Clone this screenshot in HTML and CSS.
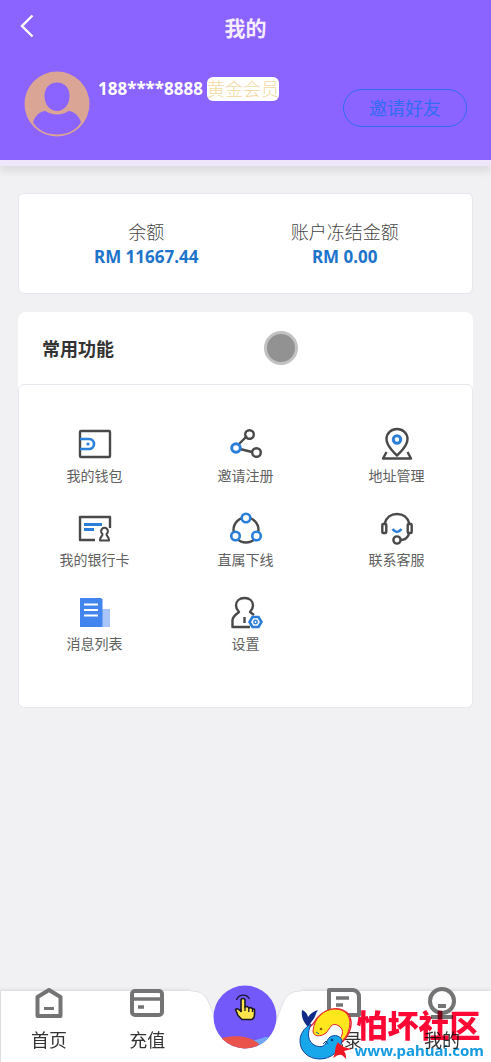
FILE: index.html
```html
<!DOCTYPE html>
<html lang="zh-CN">
<head>
<meta charset="utf-8">
<meta name="viewport" content="width=device-width, initial-scale=1">
<title>我的</title>
<link rel="stylesheet" href="styles.css">
</head>
<body>
<div class="page">
  <header class="header">
    <div class="titlebar">
      <button class="back" type="button" aria-label="返回">
        <svg width="14" height="24" viewBox="0 0 14 24" fill="none" stroke="currentColor" stroke-width="2.4"><path d="M12.500 1.500 2 12l10.500 10.500"/></svg>
      </button>
      <h1 class="title">我的</h1>
    </div>
    <div class="profile">
      <svg class="avatar" viewBox="0 0 66 66"><circle cx="33" cy="33" r="32.500" fill="#dba596"/><path d="M33 11.500c7.500 0 12.500 5.500 12.500 13.500 0 8.500-5.500 15-12.500 15s-12.500-6.500-12.500-15c0-8 5-13.500 12.500-13.500Z" fill="#8b63ff"/><path d="M9 51.500c2-7 7-11 12.500-11.500 3 2 7 3.500 11.500 3.500s8.500-1.500 11.500-3.500C50 40.500 55 44.500 57 51.500 51 60 43 63.500 33 63.500S15 60 9 51.500Z" fill="#8b63ff"/></svg>
      <div class="member"><span class="phone">188****8888</span><span class="level">黄金会员</span></div>
      <button class="invite" type="button">邀请好友</button>
    </div>
  </header>

  <main class="content">
    <section class="card balances">
      <div class="balance"><span class="balance-label">余额</span><strong class="amount">RM 11667.44</strong></div>
      <div class="balance"><span class="balance-label">账户冻结金额</span><strong class="amount">RM 0.00</strong></div>
    </section>

    <section class="features">
      <div class="features-head">
        <h2 class="features-title">常用功能</h2>
        <span class="touch"></span>
      </div>
      <div class="features-grid">
        <a class="feature" href="#"><svg class="icon" viewBox="0 0 34 34"><rect class="dark" x="2" y="4" width="30" height="26" rx="1"/><path class="blue" d="M2 12h9a5 5 0 0 1 0 10H2"/><circle cx="10" cy="17" r="1.600" class="dot"/></svg>我的钱包</a>
        <a class="feature" href="#"><svg class="icon" viewBox="0 0 34 34"><path class="dark" d="m10 17 8-8M11 22l12 3"/><circle class="dark" cx="20.500" cy="7.500" r="4.300"/><circle class="dark" cx="27.500" cy="25.500" r="4.300"/><circle class="blue wide" cx="7" cy="21" r="4.300"/></svg>邀请注册</a>
        <a class="feature" href="#"><svg class="icon" viewBox="0 0 34 34"><path class="dark" d="M17 28.500S6.500 19.500 6.500 12a10.500 10 0 0 1 21 0C27.500 19.500 17 28.500 17 28.500ZM6.500 25l-3.500 6.500h28l-3.500-6.500"/><circle class="blue wide" cx="17" cy="12.500" r="3.700"/></svg>地址管理</a>
        <a class="feature" href="#"><svg class="icon" viewBox="0 0 34 34"><path class="dark" d="M17 29H2V6h30v11"/><path class="blue wide" d="M6 13.500h18M6 18.500h10"/><path class="dark thin" d="M24.500 23a3.400 3.400 0 1 1 4 0c-.5 2 2.500 2 2.500 6.500h-9c0-4.500 3-4.500 2.500-6.500Z"/></svg>我的银行卡</a>
        <a class="feature" href="#"><svg class="icon" viewBox="0 0 34 34"><circle class="dark" cx="17" cy="19" r="12.500"/><circle class="blue filled" cx="17" cy="7" r="4.300"/><circle class="blue filled" cx="6.500" cy="25" r="4.300"/><circle class="blue filled" cx="27.500" cy="25" r="4.300"/></svg>直属下线</a>
        <a class="feature" href="#"><svg class="icon" viewBox="0 0 34 34"><path class="dark" d="M4.500 13C6 6.500 11 3 17 3s11 3.500 12.500 10M29 23c-1.500 4-5 6-8.500 6"/><rect class="dark" x="2.300" y="13" width="4" height="9" rx="1"/><rect class="dark" x="27.700" y="13" width="4" height="9" rx="1"/><circle class="dark" cx="17" cy="29" r="3.600"/><path class="blue" d="M12.500 18q4.500 6 9 0"/></svg>联系客服</a>
        <a class="feature" href="#"><svg class="icon" viewBox="0 0 34 34"><path fill="#a9c5fb" d="M23 14h9v18h-9z"/><path fill="#4285ef" d="M2 3h21l1.500 1.500V32H2z"/><path stroke="#fff" stroke-width="2" d="M6 9.500h14M6 15h14M6 20.500h14"/></svg>消息列表</a>
        <a class="feature" href="#"><svg class="icon" viewBox="0 0 34 34"><path class="dark" d="M21 32H3.500v-7c0-3 2.500-5 6.500-8-2-2-3-4-3-6.500C7 6 10.500 3 15.500 3S24 6 24 10.500c0 2.500-1 4.500-3 6.500l4 3M15.500 22v6"/><path class="blue filled" d="m23.500 22-3 5 3 5h6l3-5-3-5Z"/><circle cx="26.500" cy="27" r="1.700" fill="none" stroke="#2b7fd9" stroke-width="1.500"/></svg>设置</a>
      </div>
    </section>
  </main>

  <nav class="tabbar">
    <div class="tabbar-back">
      <span class="shelf shelf-left"></span>
      <svg class="notch" viewBox="0 0 110 71"><path fill="#fff" d="M0 0C9 0 14 3 18 12L22 22C28 44 38 57 55 57S82 44 88 22L92 12C96 3 101 0 110 0v71H0Z"/><path fill="none" stroke="#dedfe5" d="M0 0C9 0 14 3 18 12L22 22C28 44 38 57 55 57S82 44 88 22L92 12C96 3 101 0 110 0"/></svg>
      <span class="shelf shelf-right"></span>
    </div>
    <a class="tab" href="#"><svg class="tab-icon" viewBox="0 0 36 32"><path d="M6.500 10 18 3l11.500 7v19h-23Z"/><path stroke-width="3" d="M13 21.500h10"/></svg>首页</a>
    <a class="tab" href="#"><svg class="tab-icon" viewBox="0 0 36 32"><rect x="3" y="4" width="30" height="24" rx="3"/><path stroke-width="3.500" d="M3 12h30M9 20h6"/></svg>充值</a>
    <a class="tab tab-center" href="#" aria-label="点击">
      <svg class="orb" viewBox="0 0 64 64"><defs><clipPath id="orb-clip"><circle cx="32" cy="32" r="31.500"/></clipPath></defs><g clip-path="url(#orb-clip)"><path fill="#7459fa" d="M0 0h64v64H0z"/><path fill="#70a7f5" d="M38 56q10-2 14-4h12v12H38z"/><path fill="#e9534b" d="M6 54c14-5 32-3 40 5l-3 5H6z"/></g><path fill="none" stroke="#171733" stroke-width="1.300" d="M23.500 15a7 7 0 0 1 13-1"/><path fill="#ffe44b" stroke="#191927" stroke-width="1.600" stroke-linejoin="round" d="M28 24V15.500q0-2 2-2t2 2V22c2-1 3.300 0 3.800 1 2-.8 3.200 0 3.700 1 1.500-.4 2.500.5 2 2v4q0 3-2.500 4.500H29l-4-4-2.500-6q2-2 5.500 2Z"/><path fill="none" stroke="#191927" stroke-width="1.300" d="M32 22v4m3.800-3v4m3.700-3v3M28 24v3"/></svg>
    </a>
    <a class="tab" href="#"><svg class="tab-icon" viewBox="0 0 36 32"><path d="M3 3h24q6 1 6 7v18H3Z"/><path stroke-width="3.500" d="M10 11h13M10 18h7"/></svg>记录</a>
    <a class="tab" href="#"><svg class="tab-icon" viewBox="0 0 36 32"><circle cx="18" cy="14" r="12"/><path d="M14 19h8M7 30h22"/></svg>我的</a>
  </nav>

  <div class="brand">
    <svg class="fish" viewBox="0 0 56 56">
      <path fill="#fff" stroke="#e4252d" stroke-width="1.500" d="M15 18C24 2 42-2 51 9c6 11-2 27-15 32-12 6-26 1-27-12 0-4 2-8 6-11Z"/>
      <path fill="#102b87" d="M10 21C5 16 3 10 4 4c3 1 5 3 6 7 3-4 6-6 10-7-3 4-2 7-6 11Z"/>
      <path fill="#ffe61d" stroke="#e4252d" d="M15 25C16 12 26 3 37 3c12 0 17 9 14 20-2 8-7 13-14 16 8-8 10-15 4-19-8-5-9 3-13 7-5 4-13 4-13-2Z"/>
      <path fill="#18a7eb" stroke="#17439e" d="M13 18c-4 9-4 18 5 22 11 3 9-5 14-9 5-3 11-1 12 4-2 10-11 18-22 18C10 53 2 45 2 35c0-7 4-13 11-17Z"/>
      <path fill="#ee1620" d="M40 36c3 4 7 6 14 7l-8 2c2 3 2 5 2 8-3-3-4-5-7-4-2 0-4 2-6 3 3-5 1-10 5-16Z"/>
      <circle cx="23" cy="23" r="1.300" fill="#8b5a00"/><circle cx="34" cy="34" r="1.300" fill="#103a79"/>
      <path fill="none" stroke="#16518c" d="m25 38 3-3 2 3M18 26l3 2"/>
    </svg>
    <div class="brand-text"><span class="brand-name">怕坏社区</span><span class="brand-url">www.pahuai.com</span></div>
  </div>
</div>
</body>
</html>
```
FILE: styles.css
```css
* { box-sizing: border-box; }

body {
  margin: 0;
  background: #f1f1f4;
  color: #333;
  font-family: "Noto Sans", "Noto Sans CJK SC", sans-serif;
}

button { font: inherit; background: none; cursor: pointer; }
a { color: inherit; text-decoration: none; }
h1, h2 { margin: 0; }

.page { position: relative; min-height: 100vh; padding-bottom: 72px; }

.header {
  background: #8b63ff;
  border-bottom: 6px solid #eee6fb;
  box-shadow: 0 6px 6px #dedee1;
}

.titlebar {
  display: grid;
  grid-template-columns: 52px 1fr 52px;
  align-items: center;
  height: 56px;
}

.back {
  display: flex;
  height: 56px;
  align-items: center;
  padding: 0 0 4px 20px;
  border: 0;
  color: #fff;
}

.title {
  font-size: 21px;
  line-height: 56px;
  text-align: center;
  color: #f5edff;
}

.profile {
  display: flex;
  align-items: flex-start;
  padding: 15px 24px 23px;
}

.avatar { width: 66px; height: 66px; flex: none; }

.member {
  display: flex;
  flex: 1;
  align-items: center;
  gap: 4px;
  margin: 6px 0 0 8px;
  white-space: nowrap;
}

.phone { font-size: 17px; line-height: 24px; font-weight: 700; color: #fff; }

.level {
  border-radius: 6px;
  background: #fff;
  color: #f0d9a0;
  font-size: 18px;
  line-height: 24px;
  font-weight: 300;
}

.invite {
  width: 124px;
  height: 38px;
  margin-top: 18px;
  padding: 0;
  border: 1px solid #306df3;
  border-radius: 19px;
  color: #306df3;
  font-size: 18px;
  line-height: 36px;
}

.content {
  display: grid;
  gap: 18px;
  padding: 27px 18px;
}

.card {
  border: 1px solid #e5e6ec;
  border-radius: 6px;
  background: #fff;
}

.balances {
  display: grid;
  grid-template-columns: 1fr 1fr;
  padding: 25px 28px;
}

.balance { display: grid; justify-items: center; }

.balance-label { font-size: 18px; font-weight: 300; line-height: 26px; color: #444; }
.amount { font-size: 17px; line-height: 23px; color: #1e74cb; }

.features { border-radius: 8px; background: #fff; }

.features-head {
  display: grid;
  grid-template-columns: 222px 1fr;
  align-items: center;
  height: 72px;
  padding-left: 24px;
}

.features-title { padding-top: 2px; font-size: 18px; line-height: 26px; }

.touch {
  width: 34px;
  height: 34px;
  border: 3px solid #c2c2c2;
  border-radius: 50%;
  background: #929292;
}

.features-grid {
  display: grid;
  grid-template-columns: repeat(3, 1fr);
  grid-auto-rows: 84px;
  min-height: 324px;
  padding-top: 42px;
  border: 1px solid #e8e8ee;
  border-radius: 6px;
}

.feature {
  display: flex;
  flex-direction: column;
  align-items: center;
  gap: 4px;
  font-size: 14px;
  line-height: 22px;
  color: #606060;
}

.icon { width: 34px; height: 34px; fill: none; }
.dark { stroke: #494949; stroke-width: 2.4; stroke-linejoin: round; }
.blue { stroke: #2b7fd9; stroke-width: 2.6; }
.wide { stroke-width: 3; }
.thin { stroke-width: 2; }
.filled { fill: #fff; }
.dot { fill: #2b7fd9; }

.tabbar {
  position: fixed;
  bottom: 0;
  left: 0;
  right: 0;
  display: grid;
  grid-template-columns: repeat(5, 1fr);
  height: 71px;
  isolation: isolate;
}

.tabbar-back { position: absolute; inset: 0; z-index: -1; display: flex; }
.shelf { flex: 1; background: #fff; box-shadow: 0 -1px 3px #d5d5db; clip-path: inset(-4px 0 0 0); }
.shelf-left { border-left: 1px solid #ddd; }
.notch { width: 110px; height: 71px; overflow: visible; }

.tab {
  display: flex;
  flex-direction: column;
  align-items: center;
  font-size: 18px;
  line-height: 26px;
  color: #333;
}

.tab-icon {
  width: 36px;
  height: 32px;
  margin: -4px 0 8px;
  fill: none;
  stroke: #747474;
  stroke-width: 4;
  stroke-linejoin: round;
}

.orb { width: 64px; height: 64px; margin-top: -6px; }

.brand {
  position: absolute;
  right: 7px;
  bottom: 0;
  display: flex;
  align-items: center;
  pointer-events: none;
}

.fish { width: 56px; height: 56px; }

.brand-text {
  display: grid;
  white-space: nowrap;
  mix-blend-mode: multiply;
}

.brand-name {
  padding-left: 2px;
  font-family: "Noto Sans CJK SC", sans-serif;
  font-size: 31px;
  font-weight: 900;
  line-height: 32px;
  color: #ff0734;
}

.brand-url {
  font-size: 15px;
  font-weight: 700;
  line-height: 20px;
  color: #159be0;
}
```
